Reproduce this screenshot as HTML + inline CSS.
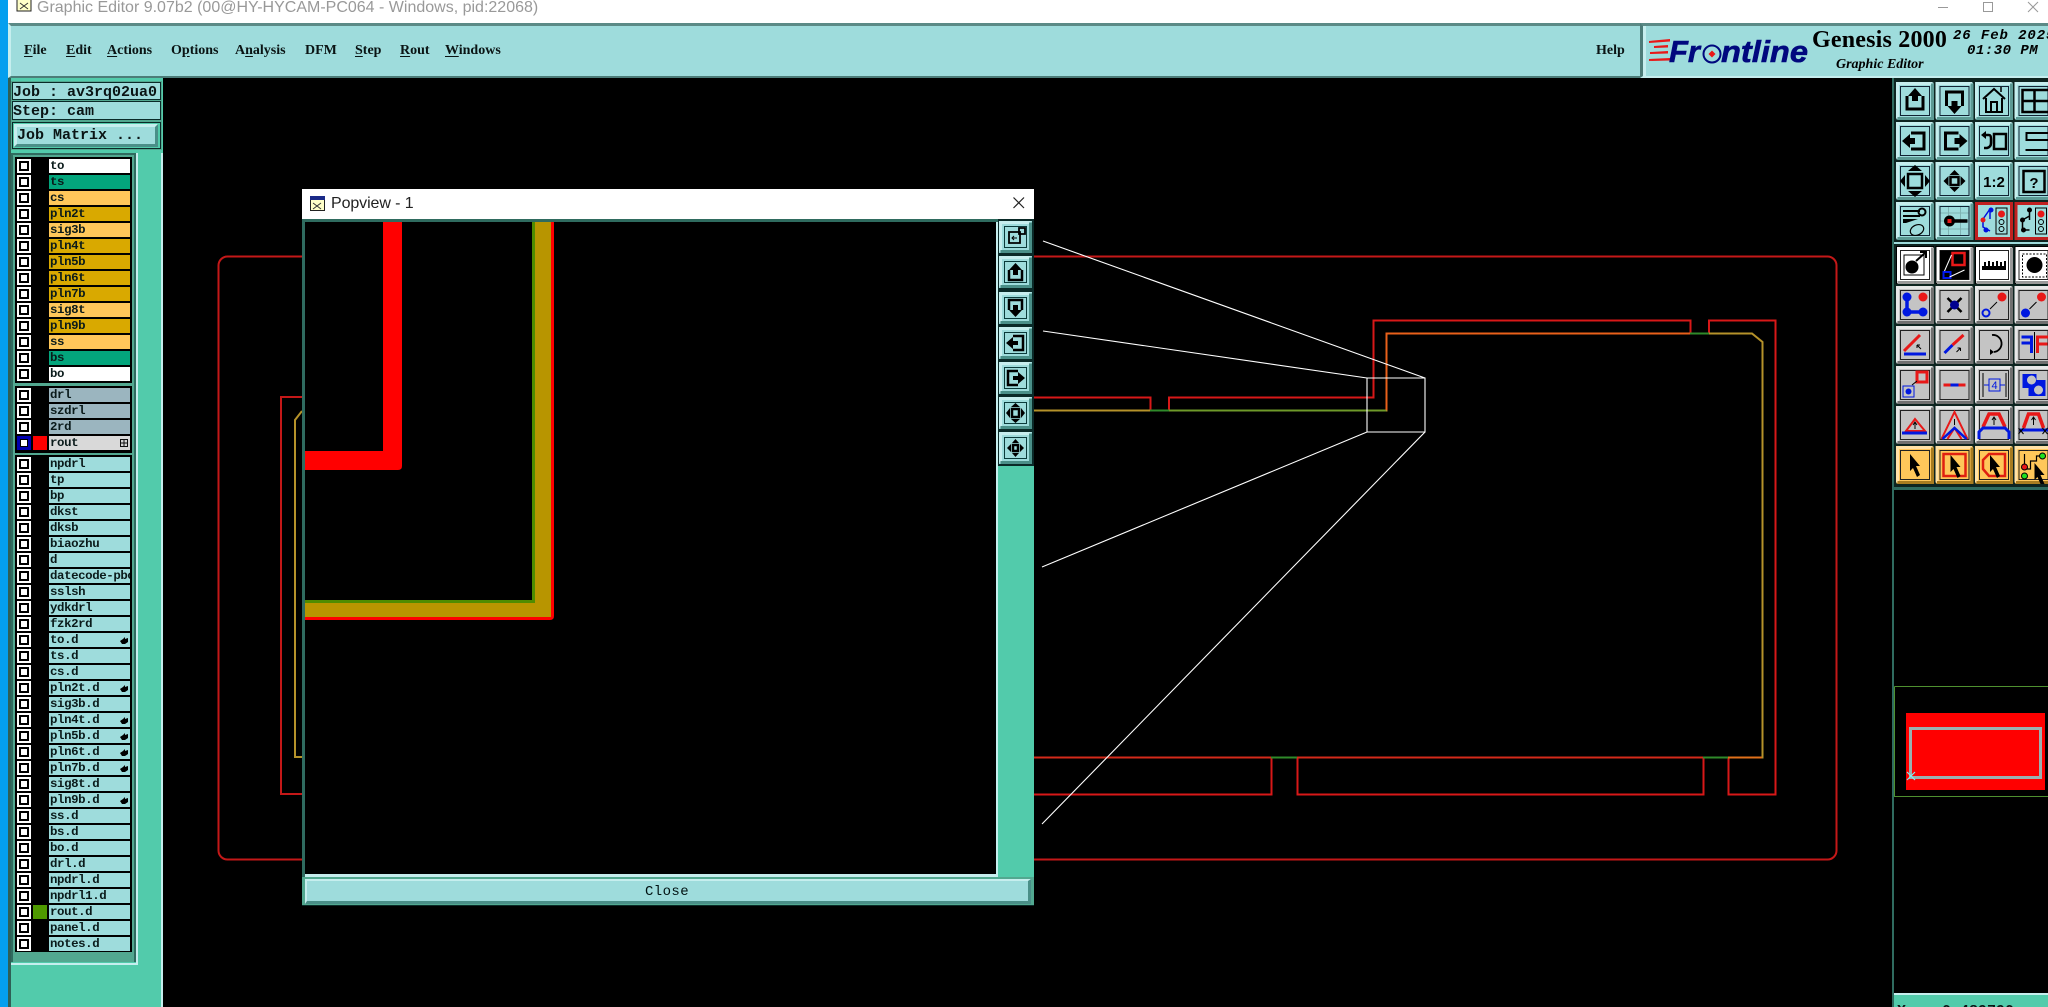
<!DOCTYPE html>
<html><head><meta charset="utf-8"><title>Graphic Editor</title>
<style>
html,body{margin:0;padding:0;background:#000;width:2048px;height:1007px;overflow:hidden}
div,svg{position:absolute}
.m{font:bold 14px/16px "Liberation Serif",serif;color:#0a1414;top:43px;white-space:nowrap}
.m u{text-underline-offset:2px}
.mono{font-family:"Liberation Mono",monospace;font-weight:bold;color:#0a1414;white-space:pre}
p{position:relative;display:block;margin:0 0 2px 34px;width:81px;height:14px;background:#9edcdc;font:bold 12.4px/14px "Liberation Mono",monospace;color:#0a1a1a;letter-spacing:-.4px;padding:0;text-indent:1px;white-space:nowrap}
p::before{content:"";position:absolute;left:-30px;top:2px;width:6px;height:6px;background:#fff;border:2px solid #000;outline:2px solid #fff}
p.w{background:#fff}p.g{background:#03a57c}p.o{background:#ffc75a}p.y{background:#d9a900}p.s{background:#9bb5bf}p.x{background:#d9d9d9}
p i{position:absolute;left:-16px;top:0;width:14px;height:14px}
p span{display:block;width:81px;overflow:hidden}
.h{position:absolute;right:2px;top:3px;width:8px;height:8px}
.btn{background:#9edcdc;border-style:solid;border-width:3px;border-color:#c6eeee #4a8f88 #4a8f88 #c6eeee;box-sizing:border-box}
</style></head><body>
<!-- canvas -->
<svg width="2048" height="1007" style="left:0;top:0" fill="none">
<rect x="218.500" y="256.500" width="1618" height="603" rx="9" stroke="#c41818" stroke-width="2"/>
<path d="M302 397H281V794H302" stroke="#c41818" stroke-width="2"/>
<path d="M302 411L295 420V757H302" stroke="#b5922a" stroke-width="2"/>
<path d="M1034 397.500H1150.500V410M1169 410V397.500H1373.500V320.500H1690.500V333M1709 333V320.500H1775.500V794.500H1728.500V757M1703.500 757V794.500H1297.500V757M1271.500 757V794.500H1034" stroke="#d81818" stroke-width="2"/>
<path d="M1034 410.500H1386.500V333.500H1752L1762.500 342V757.500H1034" stroke="#b5922a" stroke-width="2"/>
<path d="M1169 410.500H1386" stroke="#6f9a2a" stroke-width="2"/>
<path d="M1386.500 410V333.500H1690" stroke="#e8601a" stroke-width="2"/>
<path d="M1150 410.500H1169M1690 333.500H1709M1271 757.500H1297M1703 757.500H1728" stroke="#2f8a2a" stroke-width="2"/>
<path d="M1034 757.500H1271M1297 757.500H1703" stroke="#d42a1a" stroke-width="2"/>
<path d="M1728 757.500H1762" stroke="#e0701a" stroke-width="2"/>
<path d="M1367 378H1425V432H1367ZM1043 241L1425 378M1043 331L1367 378M1042 567L1367 432M1042 824L1425 432" stroke="#fff" stroke-width="1.1"/>
</svg>

<!-- title bar -->
<div style="left:0;top:0;width:8px;height:1007px;background:#049fef"></div>
<div style="left:8px;top:0;width:2040px;height:23px;background:#fff"></div>
<svg width="18" height="18" style="left:16px;top:-5px"><rect x="1" y="1" width="14" height="15" fill="#ffffc8" stroke="#222"/><rect x="1" y="1" width="14" height="4" fill="#1a2a88"/><path d="M4 8L12 14M12 8L4 14" stroke="#333"/></svg>
<div style="left:37px;top:-2px;font:16px/20px 'Liberation Sans',sans-serif;color:#999;white-space:nowrap">Graphic Editor 9.07b2 (00@HY-HYCAM-PC064 - Windows, pid:22068)</div>
<svg width="110" height="23" style="left:1938px;top:0" fill="none" stroke="#999"><path d="M0 7.500H10M45.500 2.500H54.500V11.500H45.500ZM90 2L100 12M100 2L90 12"/></svg>

<!-- menu bar -->
<div style="left:8px;top:23px;width:1632px;height:55px;background:#9edcdc;border-top:3px solid #5b8a86;border-bottom:2px solid #4c7c78;box-sizing:border-box;border-left:3px solid #c6eeee"></div>
<div style="left:1640px;top:23px;width:408px;height:55px;background:#9edcdc;border-top:3px solid #5b8a86;border-bottom:2px solid #c6eeee;box-sizing:border-box;border-left:3px solid #4c7c78"></div>
<div style="left:1643px;top:26px;width:3px;height:52px;background:#c6eeee"></div>
<div class="m" style="left:24px"><u>F</u>ile</div>
<div class="m" style="left:66px"><u>E</u>dit</div>
<div class="m" style="left:107px"><u>A</u>ctions</div>
<div class="m" style="left:171px">O<u>p</u>tions</div>
<div class="m" style="left:235px">A<u>n</u>alysis</div>
<div class="m" style="left:305px">DFM</div>
<div class="m" style="left:355px"><u>S</u>tep</div>
<div class="m" style="left:400px"><u>R</u>out</div>
<div class="m" style="left:445px"><u>W</u>indows</div>
<div class="m" style="left:1596px">Help</div>

<!-- logo -->
<svg width="200" height="40" style="left:1646px;top:32px" fill="#00087e">
<path d="M3 9L24 7V9.500L3 11ZM8 14L22 13V15.500L8 16ZM4 20L22 19V21.500L4 22ZM3 27L24 26V28.500L3 29Z" fill="#e81818"/>
<text x="23" y="30" font-family="Liberation Sans" font-weight="bold" font-style="italic" font-size="31" stroke="#00087e" stroke-width=".6">Fr</text>
<circle cx="66" cy="22" r="8.500" fill="none" stroke="#00087e" stroke-width="2"/><path d="M66 18.500L69.500 22L66 25.500L62.500 22Z" fill="#e81818"/>
<text x="75" y="30" font-family="Liberation Sans" font-weight="bold" font-style="italic" font-size="31" textLength="87" lengthAdjust="spacingAndGlyphs" stroke="#00087e" stroke-width=".6">ntline</text>
</svg>
<div style="left:1812px;top:26px;font:bold 24px/28px 'Liberation Serif',serif;color:#000;white-space:nowrap;letter-spacing:.2px">Genesis 2000</div>
<div style="left:1836px;top:57px;font:italic bold 14px/16px 'Liberation Serif',serif;color:#000;white-space:nowrap">Graphic Editor</div>
<div class="mono" style="left:1953px;top:28px;font-size:14px;line-height:16px;font-style:italic;letter-spacing:.9px;color:#000">26 Feb 2025</div>
<div class="mono" style="left:1967px;top:43px;font-size:14px;line-height:16px;font-style:italic;letter-spacing:.5px;color:#000">01:30 PM</div>

<!-- left panel -->
<div style="left:8px;top:78px;width:155px;height:929px;background:#52cbab"></div>
<div style="left:8px;top:78px;width:3px;height:929px;background:#2f5f56"></div>
<div style="left:11px;top:81px;width:151px;height:69px;background:#52a890"></div>
<div style="left:12px;top:82px;width:149px;height:18px;background:#9edcdc;border:1px solid #0a2a28;box-sizing:border-box"></div>
<div style="left:12px;top:101px;width:149px;height:19px;background:#9edcdc;border:1px solid #0a2a28;box-sizing:border-box"></div>
<div style="left:12px;top:122px;width:149px;height:27px;background:#52cbab;border:1px solid #0a2a28;box-sizing:border-box"></div>
<div class="btn" style="left:14px;top:124px;width:144px;height:23px"></div>
<div class="mono" style="left:13px;top:84px;font-size:15px;line-height:17px">Job : av3rq02ua0</div>
<div class="mono" style="left:13px;top:103px;font-size:15px;line-height:17px">Step: cam</div>
<div class="mono" style="left:17px;top:127px;font-size:15px;line-height:17px">Job Matrix ...</div>

<div style="left:11px;top:153px;width:125px;height:809px;background:#2f6b5f"></div>
<div style="left:13px;top:155px;width:121px;height:807px;background:#52a890"></div>
<div style="left:15px;top:157px;width:117px;height:226px;background:#000"></div>
<div style="left:15px;top:386px;width:117px;height:67px;background:#000"></div>
<div style="left:15px;top:455px;width:117px;height:497px;background:#000"></div>
<div style="left:136px;top:153px;width:2px;height:812px;background:#c6eeee"></div>
<div style="left:161px;top:153px;width:2px;height:854px;background:#c6eeee"></div>
<div style="left:11px;top:963px;width:125px;height:2px;background:#c6eeee"></div>
<div style="left:15px;top:159px;width:120px">
<p class="w">to</p><p class="g">ts</p><p class="o">cs</p><p class="y">pln2t</p><p class="o">sig3b</p><p class="y">pln4t</p><p class="y">pln5b</p><p class="y">pln6t</p><p class="y">pln7b</p><p class="o">sig8t</p><p class="y">pln9b</p><p class="o">ss</p><p class="g">bs</p><p class="w">bo</p>
</div>
<div style="left:15px;top:388px;width:120px">
<p class="s">drl</p><p class="s">szdrl</p><p class="s">2rd</p><p class="x"><i style="background:#f00"></i>rout<svg class="h" style="top:3px" viewBox="0 0 8 8"><path d="M.5.500H7.500V7.500H.5ZM4 0V8M0 4H8" fill="none" stroke="#111"/></svg></p>
</div>
<div style="left:17px;top:436px;width:14px;height:14px;background:#0000b0"></div>
<div style="left:20px;top:439px;width:8px;height:8px;background:#000"></div>
<div style="left:21px;top:440px;width:6px;height:6px;background:#fff"></div>
<div style="left:15px;top:457px;width:120px">
<p>npdrl</p><p>tp</p><p>bp</p><p>dkst</p><p>dksb</p><p>biaozhu</p><p>d</p><p><span>datecode-pbo</span></p><p>sslsh</p><p>ydkdrl</p><p>fzk2rd</p>
<p>to.d<svg class="h" viewBox="0 0 8 8"><path d="M0 5L3 3L5 1V3L8 2V6L5 8H2Z"/></svg></p>
<p>ts.d</p><p>cs.d</p>
<p>pln2t.d<svg class="h" viewBox="0 0 8 8"><path d="M0 5L3 3L5 1V3L8 2V6L5 8H2Z"/></svg></p>
<p>sig3b.d</p>
<p>pln4t.d<svg class="h" viewBox="0 0 8 8"><path d="M0 5L3 3L5 1V3L8 2V6L5 8H2Z"/></svg></p>
<p>pln5b.d<svg class="h" viewBox="0 0 8 8"><path d="M0 5L3 3L5 1V3L8 2V6L5 8H2Z"/></svg></p>
<p>pln6t.d<svg class="h" viewBox="0 0 8 8"><path d="M0 5L3 3L5 1V3L8 2V6L5 8H2Z"/></svg></p>
<p>pln7b.d<svg class="h" viewBox="0 0 8 8"><path d="M0 5L3 3L5 1V3L8 2V6L5 8H2Z"/></svg></p>
<p>sig8t.d</p>
<p>pln9b.d<svg class="h" viewBox="0 0 8 8"><path d="M0 5L3 3L5 1V3L8 2V6L5 8H2Z"/></svg></p>
<p>ss.d</p><p>bs.d</p><p>bo.d</p><p>drl.d</p><p>npdrl.d</p><p>npdrl1.d</p><p><i style="background:#4f9a00"></i>rout.d</p><p>panel.d</p><p>notes.d</p>
</div>

<!-- popup -->
<div style="left:302px;top:189px;width:732px;height:30px;background:#fff"></div>
<svg width="18" height="18" style="left:309px;top:195px"><rect x="1.500" y="1.500" width="14" height="14" fill="#ffffc8" stroke="#222"/><rect x="1" y="1" width="15" height="4" fill="#1a2a88"/><path d="M4 8L12 14M12 8L4 14" stroke="#333"/></svg>
<div style="left:331px;top:193px;font:16px/22px 'Liberation Sans',sans-serif;color:#222;white-space:nowrap;letter-spacing:-.1px">Popview - 1</div>
<svg width="14" height="14" style="left:1012px;top:196px" fill="none" stroke="#222" stroke-width="1.200"><path d="M1.500 1.500L12 12M12 1.500L1.500 12"/></svg>
<div style="left:302px;top:219px;width:732px;height:687px;background:#52cbab"></div>
<div style="left:302px;top:219px;width:732px;height:3px;background:#2f6b5f"></div>
<div style="left:302px;top:219px;width:3px;height:658px;background:#2f6b5f"></div>
<div style="left:305px;top:222px;width:691px;height:652px;background:#000"></div>
<div style="left:305px;top:874px;width:691px;height:3px;background:#c6eeee"></div>
<div style="left:996px;top:222px;width:2px;height:655px;background:#c6eeee"></div>
<div style="left:998px;top:219px;width:36px;height:247px;background:#0a2a28"></div>
<svg width="691" height="652" style="left:305px;top:222px">
<path d="M78 0H97V244Q97 248 93 248H0V229H78Z" fill="#f00"/>
<path d="M227 0H249V394Q249 398 245 398H0V378H227Z" fill="#f00"/>
<path d="M227 0H246V395H0V378H227Z" fill="#4f8c00"/>
<path d="M230 0H246V395H0V381H230Z" fill="#b89500"/>
</svg>
<div style="left:302px;top:877px;width:732px;height:29px;background:#52a890;border-bottom:1px solid #0a2a28;box-sizing:border-box"></div>
<div class="btn" style="left:305px;top:879px;width:726px;height:25px;border-width:2px 3px 3px 2px"></div>
<div style="left:645px;top:884px;font:14px/17px 'Liberation Mono',monospace;color:#011;letter-spacing:.4px">Close</div>
<svg width="36" height="247" style="left:998px;top:219px" fill="none" stroke="#000">
<defs><g id="p"><rect x="1" y="2" width="33" height="32" fill="#9edcdc" stroke="none"/><path d="M2.500 32.500V3.500H32.500" stroke="#c6eeee" stroke-width="3"/><path d="M32.500 3.500V32.500H2.500" stroke="#4a8f88" stroke-width="3"/><rect x="6.500" y="7.500" width="22" height="21" stroke="#0a3a3a"/></g></defs>
<g><use href="#p"/><path d="M11 13H22V24H11ZM21 15V9H27V15Z" stroke-width="1.800"/><path d="M19 19H14M16 17L14 19L16 21"/></g>
<g transform="translate(0,35)"><use href="#p"/><path d="M11 16V26H24V16" stroke-width="2.500"/><path d="M17.500 9L24 16H20V21H15V16H11Z" fill="#000" stroke="none"/></g>
<g transform="translate(0,71)"><use href="#p"/><path d="M11 20V10H24V20" stroke-width="2.500"/><path d="M17.500 27L24 20H20V15H15V20H11Z" fill="#000" stroke="none"/></g>
<g transform="translate(0,106)"><use href="#p"/><path d="M15 11H25V25H15" stroke-width="2.500"/><path d="M8 18L15 12V16H20V20H15V24Z" fill="#000" stroke="none"/></g>
<g transform="translate(0,141)"><use href="#p"/><path d="M20 11H10V25H20" stroke-width="2.500"/><path d="M27 18L20 12V16H15V20H20V24Z" fill="#000" stroke="none"/></g>
<g transform="translate(0,176)"><use href="#p"/><path d="M14 14H21V22H14Z" stroke-width="2.500"/><path d="M8 18L12 13V23ZM27 18L23 13V23ZM17.500 8L22 12H13ZM17.500 28L22 24H13Z" fill="#000" stroke="none"/></g>
<g transform="translate(0,211)"><use href="#p"/><path d="M15 15H20V21H15Z" stroke-width="2.500"/><path d="M9 18L13 14V22ZM26 18L22 14V22ZM17.500 9L21 13H14ZM17.500 27L21 23H14Z" fill="#000" stroke="none"/></g>
</svg>

<!-- right panel -->
<div style="left:1892px;top:78px;width:2px;height:929px;background:#2f6b5f"></div>
<div style="left:1894px;top:78px;width:154px;height:414px;background:#0d2420"></div>
<div style="left:1894px;top:242px;width:154px;height:2px;background:#9edcdc"></div>
<div style="left:1894px;top:487px;width:154px;height:3px;background:#2f6b5f"></div>
<div style="left:1894px;top:490px;width:154px;height:2px;background:#000"></div>
<svg width="158" height="420" style="left:1890px;top:78px" fill="none" stroke="#000">
<defs>
<g id="c"><rect x=".5" y=".5" width="37" height="37" fill="#9edcdc" stroke="none"/><path d="M1.500 36.500V1.500H36.500" stroke="#c6eeee" stroke-width="3"/><path d="M36.500 1.500V36.500H1.500" stroke="#5c9a94" stroke-width="3"/><rect x="4.500" y="4.500" width="29" height="29" stroke="#123"/></g>
<g id="g"><rect x=".5" y=".5" width="37" height="37" fill="#c4c4c4" stroke="none"/><path d="M1.500 36.500V1.500H36.500" stroke="#e8e8e8" stroke-width="3"/><path d="M36.500 1.500V36.500H1.500" stroke="#707070" stroke-width="3"/><rect x="4.500" y="4.500" width="29" height="29" stroke="#222"/></g>
<g id="w"><rect x=".5" y=".5" width="37" height="37" fill="#fff"/><path d="M36.500 1.500V36.500H1.500" stroke="#999" stroke-width="3"/><rect x="4.500" y="4.500" width="29" height="29" stroke="#222"/></g>
<g id="y"><rect x=".5" y=".5" width="37" height="37" fill="#ffc75a" stroke="none"/><path d="M1.500 36.500V1.500H36.500" stroke="#ffe2a8" stroke-width="3"/><path d="M36.500 1.500V36.500H1.500" stroke="#a87c20" stroke-width="3"/><rect x="4.500" y="4.500" width="29" height="29" stroke="#222"/></g>
</defs>
<!-- row 1 -->
<g transform="translate(6,4)"><use href="#c"/><path d="M11 14V27H27V14" stroke-width="3"/><path d="M19 6L26 14H22V19H16V14H12Z" fill="#000" stroke="none"/></g>
<g transform="translate(45.500,4)"><use href="#c"/><path d="M11 24V10H27V24" stroke-width="3"/><path d="M19 32L26 24H22V19H16V24H12Z" fill="#000" stroke="none"/></g>
<g transform="translate(85,4)"><use href="#c"/><path d="M8 17L19 7L30 17M11 16V30H27V16M16 30V20H22V30" stroke-width="2"/><path d="M26 10V5" stroke-width="1.500"/></g>
<g transform="translate(124.500,4)"><use href="#c"/><path d="M8 8H38V30H8ZM20 8V30M8 19H38" stroke-width="2.500"/></g>
<!-- row 2 -->
<g transform="translate(6,44)"><use href="#c"/><path d="M15 11H28V27H15" stroke-width="3"/><path d="M6 19L14 12V16H19V22H14V26Z" fill="#000" stroke="none"/></g>
<g transform="translate(45.500,44)"><use href="#c"/><path d="M23 11H10V27H23" stroke-width="3"/><path d="M32 19L24 12V16H19V22H24V26Z" fill="#000" stroke="none"/></g>
<g transform="translate(85,44)"><use href="#c"/><path d="M19 12H31V27H19Z" stroke-width="2.500"/><path d="M9 13H14Q16 13 16 17V21Q16 25 12 26H9" stroke-width="2.500"/><path d="M6 13L11 9V17Z" fill="#000" stroke="none"/></g>
<g transform="translate(124.500,44)"><use href="#c"/><path d="M36 11H12V18H36V28H11" stroke-width="2"/></g>
<!-- row 3 -->
<g transform="translate(6,84)"><use href="#c"/><path d="M12 12H26V26H12Z" stroke-width="2.500"/><path d="M4 19L9 13V25ZM34 19L29 13V25ZM19 3L26 9H12ZM19 35L26 29H12Z" fill="#000" stroke="none"/></g>
<g transform="translate(45.500,84)"><use href="#c"/><path d="M15 15H23V23H15Z" stroke-width="2.500"/><path d="M8 19L13 14V24ZM30 19L25 14V24ZM19 8L24 13H14ZM19 30L24 25H14Z" fill="#000" stroke="none"/></g>
<g transform="translate(85,84)"><use href="#c"/><text x="19" y="25" font-family="Liberation Sans" font-weight="bold" font-size="15" text-anchor="middle" fill="#000" stroke="none">1:2</text></g>
<g transform="translate(124.500,84)"><use href="#c"/><rect x="9" y="9" width="21" height="21" stroke-width="2.500"/><text x="19.500" y="26" font-family="Liberation Sans" font-weight="bold" font-size="15" text-anchor="middle" fill="#000" stroke="none">?</text></g>
<!-- row 4 -->
<g transform="translate(6,124)"><use href="#c"/><path d="M7 9H24M7 14H24" stroke-width="2"/><path d="M7 17H22L10 21H7Z" fill="#000" stroke="none"/><circle cx="26" cy="10" r="3.500" stroke-width="2"/><ellipse cx="21" cy="28" rx="7" ry="5" stroke-width="1.200" transform="rotate(-25 21 28)"/></g>
<g transform="translate(45.500,124)"><use href="#c"/><path d="M5 19H33M5 11H33M5 27H33M13 5V33M25 5V33" stroke="#7fb4b4"/><path d="M19 19H32" stroke-width="3.500"/><circle cx="14" cy="19" r="5.500" fill="#000" stroke="none"/><rect x="12" y="17" width="4" height="4" fill="#e81818" stroke="none"/></g>
<g transform="translate(85,124)"><rect x="0" y="0" width="38" height="38" fill="#c02020" stroke="none"/><rect x="3" y="3" width="32" height="32" fill="#9edcdc" stroke="none"/><path d="M15 7V17M8 17L15 7M8 17V25L15 29" stroke="#0010e0" stroke-width="1.500"/><circle cx="16" cy="8" r="2.500" fill="#0010e0" stroke="none"/><circle cx="8" cy="18" r="2.500" fill="#e81818" stroke="none"/><circle cx="11" cy="28" r="2.500" fill="#0010e0" stroke="none"/><rect x="21" y="6" width="11" height="26" fill="#9edcdc"/><circle cx="26.500" cy="12" r="3.500" fill="#e81818" stroke="none"/><circle cx="26.500" cy="20" r="2.500"/><circle cx="26.500" cy="27" r="2.500"/></g>
<g transform="translate(124.500,124)"><rect x="0" y="0" width="38" height="38" fill="#c02020" stroke="none"/><rect x="3" y="3" width="32" height="32" fill="#9edcdc" stroke="none"/><path d="M15 7V18M8 18L15 14M8 18V28H15" stroke="#000" stroke-width="1.500"/><circle cx="15" cy="8" r="2.500" fill="#000" stroke="none"/><circle cx="8" cy="18" r="2.500" fill="#000" stroke="none"/><circle cx="9" cy="28" r="2.500" fill="#000" stroke="none"/><rect x="21" y="6" width="11" height="26" fill="#9edcdc"/><circle cx="26.500" cy="12" r="3.500" fill="#e81818" stroke="none"/><circle cx="26.500" cy="20" r="2.500"/><circle cx="26.500" cy="27" r="2.500"/></g>
<!-- row 5 -->
<g transform="translate(6,168)"><use href="#w"/><rect x="8" y="9" width="20" height="20" fill="#fff"/><circle cx="16" cy="21" r="6.500" fill="#000" stroke="none"/><path d="M20 15L29 7M24 6H30V12" stroke-width="2"/></g>
<g transform="translate(45.500,168)"><use href="#w"/><rect x="5" y="5" width="28" height="28" fill="#000"/><rect x="17" y="7" width="12" height="12" stroke="#e81818" stroke-width="2.500"/><rect x="8" y="26" width="7" height="6" stroke="#0018f0" stroke-width="2"/><path d="M16 9L9 25M14 31L29 24" stroke="#fff"/></g>
<g transform="translate(85,168)"><use href="#w"/><path d="M7 15V24H31V15H29V20H27V16H25V20H23V15H21V20H19V16H17V20H15V15H13V20H11V16H9V20H7Z" fill="#000" stroke="none"/></g>
<g transform="translate(124.500,168)"><use href="#w"/><rect x="8" y="8" width="24" height="23" stroke-dasharray="2 1.500"/><circle cx="20" cy="19" r="8" fill="#000" stroke="none"/></g>
<!-- row 6 -->
<g transform="translate(6,208)"><use href="#g"/><path d="M11 12V26H26" stroke="#0018e0" stroke-width="3.500"/><circle cx="11" cy="11" r="4.500" fill="#0018e0" stroke="none"/><circle cx="11" cy="26" r="4.500" fill="#0018e0" stroke="none"/><circle cx="27" cy="26" r="4.500" fill="#0018e0" stroke="none"/><circle cx="27" cy="11" r="4.500" fill="#e81818" stroke="none"/></g>
<g transform="translate(45.500,208)"><use href="#g"/><path d="M12 12L26 26M26 12L12 26" stroke-width="2.500"/><circle cx="19" cy="19" r="4.500" fill="#000090" stroke="none"/></g>
<g transform="translate(85,208)"><use href="#g"/><circle cx="27" cy="11" r="4.500" fill="#e81818" stroke="none"/><circle cx="11" cy="27" r="3.500" stroke="#0018e0" stroke-width="2"/><path d="M15 23L22 16"/></g>
<g transform="translate(124.500,208)"><use href="#g"/><circle cx="27" cy="11" r="4.500" fill="#e81818" stroke="none"/><circle cx="11" cy="27" r="4.500" fill="#0018e0" stroke="none"/><path d="M15 23L22 16"/></g>
<!-- row 7 -->
<g transform="translate(6,248)"><use href="#g"/><path d="M8 25L24 9" stroke="#e81818" stroke-width="3"/><path d="M8 28H30" stroke="#0018e0" stroke-width="3"/><path d="M21 19L25 23M21 19V22M21 19H24"/></g>
<g transform="translate(45.500,248)"><use href="#g"/><path d="M9 27L17 19" stroke="#0018e0" stroke-width="3"/><path d="M17 19L28 9" stroke="#e81818" stroke-width="3"/><path d="M21 26L25 22M25 22V25M25 22H22"/></g>
<g transform="translate(85,248)"><use href="#g"/><path d="M17 9A8 8 0 1 1 19 26" stroke-width="1.800"/><path d="M19 26L15 23V29Z" fill="#000" stroke="none"/></g>
<g transform="translate(124.500,248)"><use href="#g"/><path d="M7 11H17V27M7 17H16" stroke="#0018e0" stroke-width="3"/><path d="M20 6V33"/><path d="M23 27V11H34M23 18H33" stroke="#e81818" stroke-width="3"/></g>
<!-- row 8 -->
<g transform="translate(6,288)"><use href="#g"/><rect x="21" y="6" width="10" height="10" stroke="#e81818" stroke-width="3"/><rect x="7" y="20" width="11" height="11" stroke="#0018e0"/><circle cx="12.500" cy="25.500" r="3" fill="#0018e0" stroke="none"/><path d="M16 19L21 15"/></g>
<g transform="translate(45.500,288)"><use href="#g"/><path d="M8 19H30" stroke="#e81818" stroke-width="3"/><path d="M15 19H23" stroke="#0018e0" stroke-width="3"/></g>
<g transform="translate(85,288)"><use href="#g"/><path d="M8 7V31M31 7V31"/><path d="M9 19H30" stroke="#0018e0"/><rect x="14" y="13" width="11" height="12" fill="#c4c4c4" stroke="#0018e0"/><text x="19.500" y="23" font-family="Liberation Sans" font-size="11" text-anchor="middle" fill="#0018e0" stroke="none">4</text></g>
<g transform="translate(124.500,288)"><use href="#g"/><path d="M8 8H22V14H31V30H14V22H8Z" fill="#0018e0" stroke="none"/><circle cx="17" cy="14" r="4.500" fill="#c4c4c4" stroke="none"/><circle cx="24" cy="24" r="4.500" fill="#c4c4c4" stroke="none"/></g>
<!-- row 9 -->
<g transform="translate(6,328)"><use href="#g"/><path d="M10 25L19 13L29 25Z" stroke="#e81818" stroke-width="2"/><path d="M6 27H31" stroke="#0018e0" stroke-width="3"/><path d="M19 23V17M17 19L19 16L21 19"/></g>
<g transform="translate(45.500,328)"><use href="#g"/><path d="M6 33L19 6L32 33M12 33L19 22L26 33" stroke="#e81818" stroke-width="2"/><path d="M7 33L19 22L31 33" stroke="#0018e0" stroke-width="2.500"/><path d="M19 19V13"/></g>
<g transform="translate(85,328)"><use href="#g"/><path d="M8 21L14 8H24L30 21" stroke="#e81818" stroke-width="3.500"/><path d="M4 33V26L8 22H30L34 26V33" stroke="#0018e0" stroke-width="3"/><path d="M19 19V12M17 14L19 11L21 14"/></g>
<g transform="translate(124.500,328)"><use href="#g"/><path d="M9 22L14 8H24L29 22" stroke="#e81818" stroke-width="3.500"/><path d="M5 24H34" stroke="#0018e0" stroke-width="3"/><path d="M4 22L9 28M9 22L4 28M28 22L33 28M33 22L28 28"/><path d="M19 19V12M17 14L19 11L21 14"/></g>
<!-- row 10 -->
<g transform="translate(6,368)"><use href="#y"/><path d="M14 8L24 20H20L24 29L21 31L17 22L14 25Z" fill="#000" stroke="none"/></g>
<g transform="translate(45.500,368)"><use href="#y"/><rect x="8" y="8" width="22" height="22" stroke="#e02010" stroke-width="2.500"/><path d="M15 9L25 21H21L25 30L22 32L18 23L15 26Z" fill="#000" stroke="none"/></g>
<g transform="translate(85,368)"><use href="#y"/><path d="M14 8H30V30H14L8 23V14Z" stroke="#e02010" stroke-width="2.500"/><path d="M15 9L25 21H21L25 30L22 32L18 23L15 26Z" fill="#000" stroke="none"/></g>
<g transform="translate(124.500,368)"><use href="#y"/><path d="M10 8V23H16V15H22V10H28" stroke="#000" stroke-width="1.200"/><circle cx="28" cy="10" r="3" fill="#20e020" stroke="#000"/><circle cx="10" cy="21" r="3" fill="#e81818" stroke="#000"/><circle cx="10" cy="30" r="3" fill="#20e020" stroke="#000"/><path d="M20 17L30 29H26L30 38H26L23 31L20 34Z" fill="#000" stroke="none"/></g>
</svg>

<!-- nav view -->
<svg width="154" height="120" style="left:1894px;top:680px" fill="none">
<path d="M.5 6.500H154M.5 6.500V116.500H154" stroke="#4f9030"/>
<rect x="12" y="33" width="139" height="77" fill="#f00"/>
<rect x="16.500" y="48.500" width="130" height="49" stroke="#9ab0b0" stroke-width="3"/>
<path d="M13 92L21 100M21 92L13 100" stroke="#7ff0f0" stroke-width="1.200"/>
</svg>

<!-- status -->
<div style="left:1894px;top:993px;width:154px;height:2px;background:#c6eeee"></div>
<div style="left:1894px;top:995px;width:154px;height:12px;background:#52cbab;overflow:hidden">
<div class="mono" style="left:3px;top:8px;font-size:15px;line-height:17px">X =  0.489790</div>
</div>
</body></html>
